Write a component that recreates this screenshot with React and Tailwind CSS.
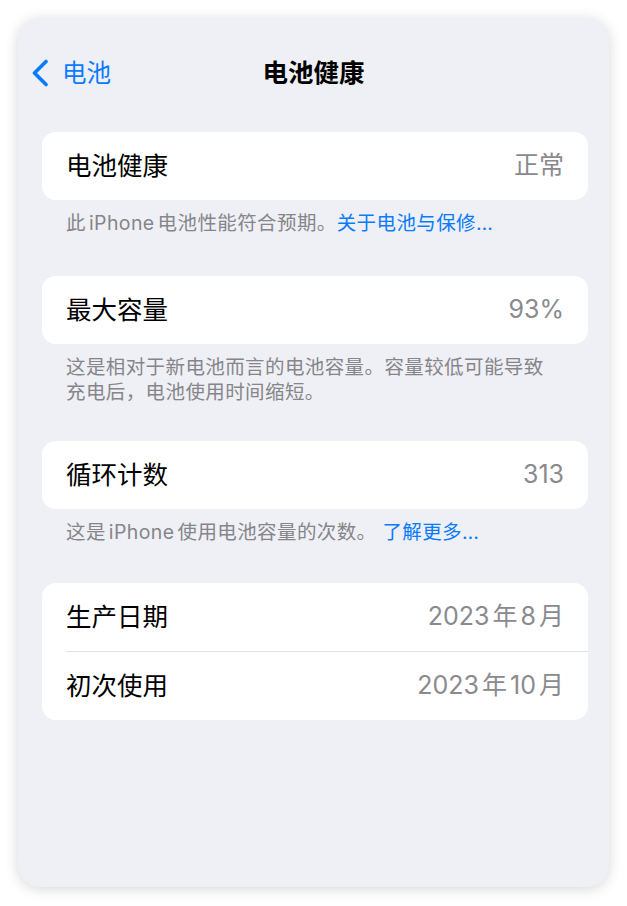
import React from 'react'

const FONT = "font-['Inter','Noto_Sans_CJK_SC',sans-serif]"

function Row({ label, value }) {
  return (
    <div className="h-[68px] px-[24px] flex items-center justify-between">
      <span className="text-[25.5px] text-black">{label}</span>
      <span className="text-[25px] text-[#8a8a8e]">{value}</span>
    </div>
  )
}

function Group({ children }) {
  return <div className="rounded-[14px] bg-white overflow-hidden">{children}</div>
}

function Footer({ children, pb = 'pb-[38px]' }) {
  return (
    <p className={`px-[24px] pt-[11px] ${pb} text-[19.5px] leading-[25px] tracking-[0.4px] text-[#85858a]`}>
      {children}
    </p>
  )
}

function DateValue({ year, month }) {
  return (
    <>
      {year}
      <span className="mx-[3px]">年</span>
      {month}
      <span className="ml-[3px]">月</span>
    </>
  )
}

export default function App() {
  return (
    <div className={`w-full h-[906px] bg-white pt-[18px] pl-[18px] pr-[18px] pb-[19px] ${FONT}`}>
      <div className="h-full rounded-[22px] bg-[#eff0f5] shadow-[0_2px_14px_rgba(0,0,0,0.16)]">
        <div className="h-[114px] pt-[36px]">
          <div className="h-[36px] grid grid-cols-[1fr_auto_1fr] items-center">
            <div className="flex items-center pl-[13px] text-[#0a7aff]">
              <svg width="18" height="28" viewBox="0 0 18 28" fill="none">
                <path d="M15 2.5 L3.5 14 L15 25.5" stroke="#0a7aff" strokeWidth="3.6" strokeLinecap="round" strokeLinejoin="round" />
              </svg>
              <span className="ml-[13px] text-[24.5px]">电池</span>
            </div>
            <div className="text-[25.5px] font-semibold text-black">电池健康</div>
            <div />
          </div>
        </div>

        <div className="ml-[24px] mr-[21px]">
          <Group>
            <Row label="电池健康" value="正常" />
          </Group>
          <Footer pb="pb-[40px]">
            此<span className="mx-[3px]">iPhone</span>电池性能符合预期。<span className="text-[#0a7aff]">关于电池与保修…</span>
          </Footer>

          <Group>
            <Row label="最大容量" value="93%" />
          </Group>
          <Footer pb="pb-[36px]">
            这是相对于新电池而言的电池容量。容量较低可能导致<br />充电后，电池使用时间缩短。
          </Footer>

          <Group>
            <Row label="循环计数" value="313" />
          </Group>
          <Footer>
            这是<span className="mx-[3px]">iPhone</span>使用电池容量的次数。 <span className="text-[#0a7aff]">了解更多…</span>
          </Footer>

          <Group>
            <Row label="生产日期" value={<DateValue year="2023" month="8" />} />
            <div className="ml-[24px] h-px bg-[#e3e3e6]" />
            <Row label="初次使用" value={<DateValue year="2023" month="10" />} />
          </Group>
        </div>
      </div>
    </div>
  )
}
